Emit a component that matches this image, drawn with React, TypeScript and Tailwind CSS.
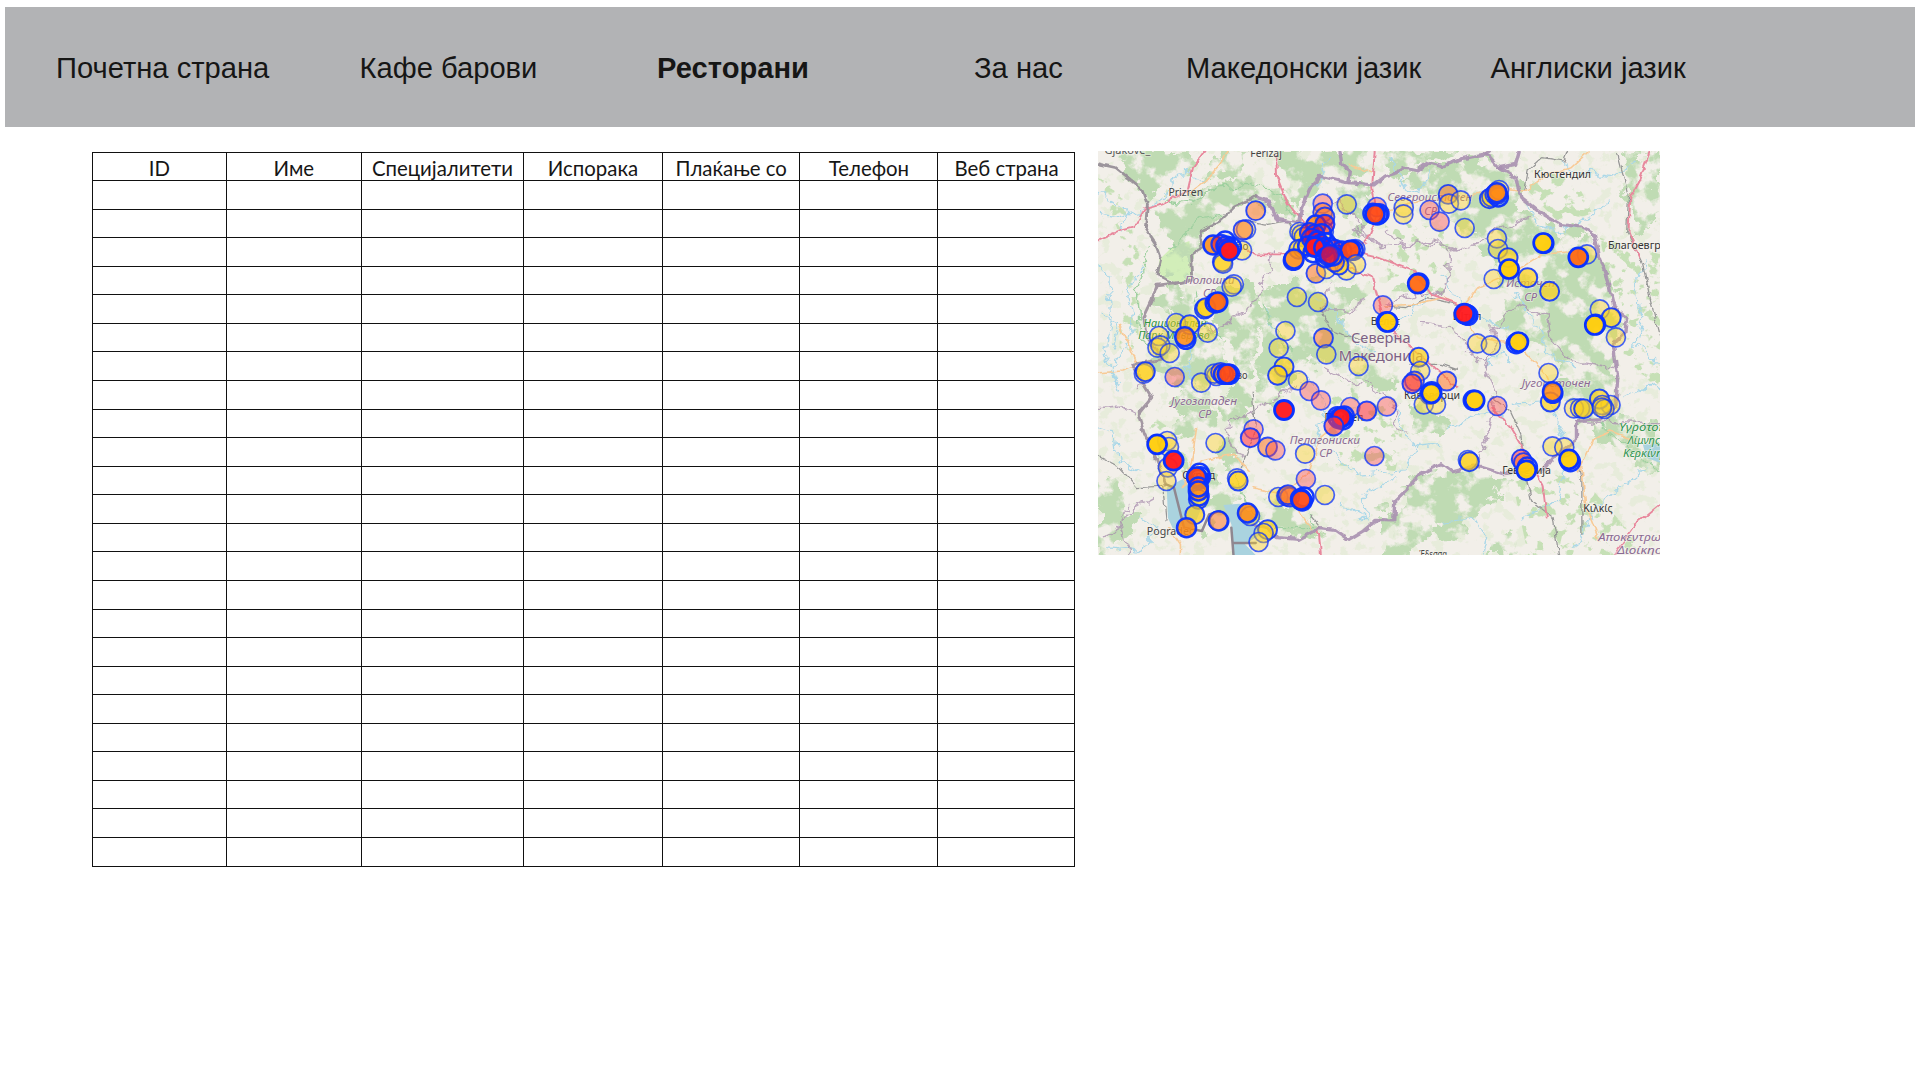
import React from "react";

const navItems = [
  { label: "Почетна страна", cell: "w-[303.5px]" },
  { label: "Кафе барови", cell: "w-[297.5px]" },
  { label: "Ресторани", cell: "w-[317px]", active: true },
  { label: "За нас", cell: "w-[212px]" },
  { label: "Македонски јазик", cell: "w-[304.5px]" },
  { label: "Англиски јазик", cell: "w-[300px]" },
];

const columns = ["ID", "Име", "Специјалитети", "Испорака", "Плаќање со", "Телефон", "Веб страна"];
const emptyRows = Array.from({ length: 24 }, (_, i) => i);

/* Map units: 1568 x 1212 stretched over 562 x 404 pixels. */
const SX = 562 / 1568;
const SY = 404 / 1212;

const woods = [
  "M80 0H265L250 70 205 115 130 135 70 60Z",
  "M150 150 215 150 300 105 380 80 500 95 545 200 500 190 470 140 430 130 360 180 300 230 255 280 260 390 180 390 205 270 160 190Z",
  "M330 0 420 20 400 70 300 90Z",
  "M510 0H765L750 90 630 80 560 190 520 110Z",
  "M650 100 760 110 725 240 670 190Z",
  "M780 10 900 0 1060 0 900 50 800 60Z",
  "M850 70 960 50 1100 20 1165 80 1200 200 1100 260 1010 240 900 120Z",
  "M1060 270 1200 200 1280 230 1385 260 1440 470 1450 690 1340 700 1250 600 1120 480 1140 420Z",
  "M1090 530 1180 470 1300 560 1440 590 1440 670 1290 640 1180 570Z",
  "M1150 480 1240 480 1270 560 1180 590Z",
  "M260 420 420 390 480 490 430 580 430 700 400 900 370 960 330 830 390 640 340 500Z",
  "M150 560 250 470 350 560 340 700 230 700 160 640Z",
  "M230 700 330 690 330 820 240 850 215 780Z",
  "M480 390 740 390 740 480 620 500 640 640 570 640 500 760 440 760 450 560Z",
  "M560 480 690 500 760 620 900 660 850 700 710 700 640 620Z",
  "M660 380 760 410 730 480 630 490Z",
  "M870 700 960 790 950 860 880 850 890 770Z",
  "M880 970 1020 960 1140 980 1100 1080 1000 1150 890 1100 830 1110Z",
  "M790 1080 870 1020 940 1140 870 1212 790 1212Z",
  "M1090 1140 1160 1160 1150 1212H1090Z",
  "M1270 680 1440 690 1440 820 1340 820 1310 760Z",
  "M1380 810 1568 810V950L1500 940 1430 880Z",
  "M1480 0H1568V170L1500 260 1470 130Z",
  "M470 1030 570 1070 610 1160 500 1150 440 1080Z",
  "M290 950 380 1000 370 1110 300 1130Z",
  "M0 990 80 1020 110 1090 40 1212H0Z",
  "M340 430 180 420 170 470 240 500Z",
];

const lightWoods = [
  "M0 80 60 110 120 330 110 620 60 590 70 280Z",
  "M1200 30 1330 80 1380 190 1280 210 1200 120Z",
  "M1400 260 1568 310V720L1470 620Z",
  "M800 200 980 240 970 430 810 420Z",
  "M650 700 860 780 830 960 640 940Z",
  "M1150 960 1350 980 1540 1212H1200Z",
  "M130 780 240 860 260 1000 180 960Z",
];

const park = "M205 290 255 270 262 370 255 392 215 396 165 365 172 325Z";

const lakes = [
  "M192 1010 235 985 275 1020 285 1080 262 1140 212 1140 195 1100Z",
  "M350 1062 395 1058 440 1100 455 1150 410 1180 440 1212H378L372 1120Z",
  "M1520 880H1568V935L1530 920Z",
];

const rivers = [
  "M0 130 40 150 90 190 130 180 180 140 240 60 300 90",
  "M0 340 30 380 40 520 20 610 60 720",
  "M120 350 80 430 100 520 70 600",
  "M240 480 260 580 250 650 300 740",
  "M470 470 500 560 520 640 600 700 640 780 600 880",
  "M820 570 870 480 930 430",
  "M590 430 650 480 720 570 780 610",
  "M960 370 1000 440 1050 490 1150 540",
  "M1190 150 1220 220 1290 240 1370 200 1430 150",
  "M1290 30 1330 60 1430 80 1500 30",
  "M1530 330 1490 410 1520 500 1500 580 1568 640",
  "M1160 430 1230 520 1250 600 1330 650",
  "M980 840 1060 780 1130 800",
  "M1160 760 1260 750 1310 870",
  "M830 770 880 890 960 880",
  "M650 900 720 970 850 960 900 880",
  "M680 1060 750 1110 740 1030 830 980",
  "M960 1110 1050 1100 1080 1160 1070 1212",
  "M1180 1100 1280 1050 1300 940",
  "M1330 1190 1400 1060 1470 1000 1530 950",
  "M0 830 50 850 60 930 120 960",
  "M30 1190 110 1200 170 1130 120 1100",
  "M820 20 850 100 900 130 920 60",
  "M640 20 620 90 580 120",
  "M1470 740 1540 700 1568 720",
  "M1080 640 1130 600 1150 640",
  "M0 190 50 200 90 190 60 240",
  "M70 600 30 660 60 700",
  "M0 480 60 520 40 600",
];

const nationalBorder =
  "M440 138 475 150 500 205 560 216 568 170 590 112 620 76 650 84 690 94 770 102 800 76 835 66 850 50 890 60 920 35 960 47 1020 22 1085 8 1120 50 1165 80 1180 140 1230 182 1290 220 1350 228 1385 250 1400 320 1425 400 1440 470 1475 500 1470 545 1438 580 1450 680 1445 760 1400 806 1335 812 1335 870 1268 920 1240 960 1130 968 1075 950 1050 945 990 962 960 938 895 970 862 1015 828 1050 825 1110 775 1108 740 1140 700 1165 660 1135 620 1130 560 1165 500 1160 470 1130 430 1120";
const westBorder =
  "M0 38 50 50 90 85 120 110 138 160 132 235 160 280 175 325 165 370 215 398 262 385 258 310 290 290 285 240 340 210 380 168 440 138";
const southWestBorder =
  "M260 390 165 402 150 450 128 500 135 560 180 625 95 640 122 690 150 740 112 790 130 850 165 930 190 1000";

const thinBorders = [
  "M0 770 60 765 105 790",
  "M95 640 120 690 110 720",
  "M150 1045 90 1080 65 1130 90 1212",
  "M720 230 790 290 900 275 975 290 980 370 960 430 890 430 800 460",
  "M640 120 710 200 780 280",
  "M250 560 350 530 400 480 445 450 450 400 485 350 490 300",
  "M640 400 630 480 700 480 750 440",
  "M900 520 980 530 1030 590 1080 640 1110 590 1100 530 1170 465 1250 490 1260 560 1320 630 1440 650",
  "M630 650 700 690 760 700 830 750 830 830 870 850",
  "M400 920 360 860 370 810 420 790 500 740 560 700",
  "M1080 640 1110 720 1090 840 1060 930",
  "M810 240 860 280 930 270 1000 300 1080 270 1110 230 1200 200",
  "M1335 812 1568 818",
  "M10 1160 60 1130 80 1060",
];

const motorways = [
  "M300 0 265 50 250 120 180 160 130 175 100 230 60 240 0 268",
  "M497 15 500 80 530 160 580 220",
  "M772 0 765 110 780 190 750 270 700 300",
  "M350 270 440 310 520 310 600 300",
  "M700 300 780 320 880 360 930 430 1020 465",
  "M700 350 765 380 780 440 800 520 860 580 930 640 1000 710",
  "M1100 770 1150 830 1190 900 1240 1000 1252 1100",
  "M1540 0 1510 90 1485 140 1480 240 1510 320",
  "M615 1130 622 1212",
  "M1440 1212 1500 1120 1568 1060",
];

const mainRoads = [
  "M0 665 70 660 110 640 90 590 60 520",
  "M360 0 340 40 300 90 250 130",
  "M275 830 260 940 235 1010 290 930 380 910 420 960",
  "M430 1010 520 1030 590 960 620 860 700 790",
  "M800 465 880 460 960 440 1020 465",
  "M1020 465 1060 410 1150 370 1240 310 1340 300",
  "M1020 500 1060 560 1170 580 1250 670 1270 720",
  "M1130 110 1190 120 1250 70 1320 50 1370 0",
  "M700 40 760 65",
  "M560 1080 600 1140",
  "M1340 960 1380 870 1430 840 1500 870",
  "M1350 950 1360 1060 1400 1170",
  "M800 180 900 150 980 140 1110 120",
  "M200 1130 230 1180 230 1212",
];

const greyRoads = [
  "M0 915 60 950 110 1010 190 1005",
  "M420 210 470 220 530 210 560 280",
  "M800 465 860 470 920 440 1020 465",
  "M1190 120 1200 60 1240 20 1300 30 1310 0",
  "M870 640 960 640 1000 655",
  "M1100 740 1150 780 1180 850 1190 960 1210 1050 1270 1100 1285 1212",
  "M1350 1150 1350 980 1340 930",
  "M590 1090 620 1130",
  "M430 720 440 840 400 950",
  "M180 1000 190 1110",
  "M1450 10 1470 90 1480 140 1475 240 1520 340 1540 440 1568 560",
  "M620 470 650 540 750 570",
];

type Marker = [number, number, string];

const kinds: Record<string, { fill: string; opacity: number; ring: number; ringOpacity: number }> = {
  y: { fill: "#ffd21a", opacity: 0.38, ring: 1.7, ringOpacity: 0.75 },
  Y: { fill: "#ffd014", opacity: 0.68, ring: 2, ringOpacity: 0.88 },
  G: { fill: "#ffcd0c", opacity: 0.96, ring: 2.7, ringOpacity: 1 },
  o: { fill: "#ff7a2c", opacity: 0.55, ring: 1.9, ringOpacity: 0.85 },
  O: { fill: "#ff8a14", opacity: 0.85, ring: 2.5, ringOpacity: 0.95 },
  D: { fill: "#ff6a14", opacity: 0.95, ring: 2.7, ringOpacity: 1 },
  p: { fill: "#ff4a4a", opacity: 0.4, ring: 1.7, ringOpacity: 0.75 },
  P: { fill: "#ff3a44", opacity: 0.58, ring: 2, ringOpacity: 0.88 },
  F: { fill: "#ff4a14", opacity: 0.93, ring: 2.6, ringOpacity: 1 },
  R: { fill: "#ff1c20", opacity: 0.97, ring: 2.8, ringOpacity: 1 },
  c: { fill: "#e0143c", opacity: 0.55, ring: 2.2, ringOpacity: 0.9 },
  n: { fill: "none", opacity: 0, ring: 2.5, ringOpacity: 0.95 },
};

const markers: Marker[] = [
  [440, 179, "o"], [413, 235, "y"], [405, 237, "o"],
  [402, 298, "y"], [347, 333, "Y"], [349, 338, "y"],
  [355, 270, "n"], [372, 288, "n"], [321, 282, "O"], [343, 280, "c"], [357, 285, "n"], [361, 292, "c"], [366, 299, "R"],
  [379, 400, "y"], [373, 407, "y"], [297, 474, "Y"], [301, 470, "Y"], [327, 456, "n"], [334, 453, "D"],
  [218, 516, "y"], [256, 521, "Y"], [306, 545, "y"], [170, 555, "y"], [245, 565, "n"], [242, 557, "O"],
  [166, 590, "y"], [174, 583, "y"], [200, 606, "y"],
  [128, 668, "y"], [132, 662, "Y"], [214, 678, "p"], [288, 695, "y"],
  [330, 675, "y"], [325, 668, "y"], [342, 664, "o"], [350, 670, "n"], [367, 670, "n"], [361, 669, "F"],
  [627, 158, "p"], [627, 184, "o"], [633, 198, "o"], [694, 160, "y"],
  [562, 243, "y"], [568, 250, "y"], [574, 258, "y"], [630, 242, "y"],
  [560, 295, "Y"], [572, 292, "y"], [608, 222, "O"], [633, 220, "c"],
  [590, 245, "c"], [605, 250, "c"], [624, 248, "n"], [595, 262, "c"], [612, 270, "n"], [585, 285, "n"],
  [620, 280, "c"], [635, 275, "n"], [648, 290, "n"], [660, 295, "c"], [600, 305, "n"], [628, 302, "n"], [668, 312, "c"],
  [680, 300, "n"], [718, 294, "y"], [712, 298, "n"], [704, 298, "F"],
  [608, 367, "o"], [637, 354, "y"], [693, 358, "y"], [720, 340, "y"], [672, 342, "Y"], [660, 333, "o"],
  [545, 328, "n"], [547, 324, "O"], [605, 288, "R"], [635, 320, "n"], [655, 315, "n"], [630, 290, "n"], [642, 315, "c"], [646, 311, "c"],
  [778, 168, "p"], [780, 192, "n"], [784, 188, "n"], [767, 187, "n"], [773, 190, "F"],
  [853, 170, "y"], [852, 190, "y"], [925, 177, "p"], [977, 130, "o"], [979, 158, "y"], [1012, 148, "y"],
  [953, 212, "p"], [1023, 231, "y"],
  [1092, 143, "Y"], [1098, 138, "y"], [1107, 130, "Y"], [1117, 138, "n"], [1119, 117, "y"], [1115, 130, "o"], [1113, 125, "O"],
  [1113, 262, "y"], [1116, 294, "y"], [1144, 320, "Y"], [1104, 384, "y"], [1147, 354, "G"], [1199, 380, "Y"],
  [1244, 277, "n"], [1242, 276, "G"], [1364, 310, "y"], [1340, 319, "D"], [1260, 421, "Y"],
  [1400, 475, "y"], [1432, 500, "Y"], [1388, 520, "n"], [1386, 522, "G"], [1445, 559, "y"],
  [895, 396, "n"], [892, 398, "D"], [795, 463, "p"], [805, 512, "n"], [808, 513, "G"],
  [1032, 493, "n"], [1027, 490, "n"], [1022, 488, "R"], [1167, 578, "n"], [1173, 573, "G"],
  [1058, 577, "y"], [1096, 583, "y"], [555, 438, "y"], [614, 453, "y"], [523, 540, "y"], [504, 591, "y"],
  [629, 561, "o"], [637, 610, "y"], [727, 645, "y"], [519, 648, "Y"], [501, 673, "Y"], [558, 688, "y"],
  [590, 720, "p"], [622, 748, "p"], [519, 777, "R"], [704, 768, "p"], [750, 780, "P"], [806, 766, "p"],
  [672, 803, "n"], [684, 806, "n"], [668, 797, "n"], [687, 795, "n"], [679, 799, "R"], [658, 825, "P"],
  [771, 915, "p"], [434, 835, "p"], [425, 860, "P"], [473, 888, "o"], [495, 898, "p"], [578, 908, "y"], [328, 876, "y"],
  [895, 619, "Y"], [899, 660, "y"], [883, 690, "o"], [876, 698, "P"], [973, 690, "o"],
  [931, 722, "n"], [926, 730, "n"], [909, 760, "y"], [943, 760, "y"], [930, 727, "G"],
  [1047, 748, "n"], [1051, 748, "G"], [1114, 765, "p"],
  [1257, 666, "y"], [1262, 753, "Y"], [1269, 727, "n"], [1268, 722, "O"],
  [1328, 772, "y"], [1345, 772, "y"], [1355, 773, "Y"], [1430, 762, "y"], [1399, 744, "Y"], [1407, 762, "y"], [1413, 774, "y"], [1406, 770, "y"],
  [1268, 886, "y"], [1301, 889, "y"], [1318, 932, "n"], [1314, 925, "G"],
  [1032, 927, "y"], [1036, 932, "Y"], [1181, 925, "P"], [1187, 935, "o"], [1198, 948, "n"], [1195, 958, "G"],
  [193, 870, "y"], [198, 888, "y"], [165, 880, "G"], [195, 949, "y"], [191, 990, "y"], [211, 929, "R"],
  [388, 982, "y"], [391, 990, "Y"], [633, 1032, "y"], [580, 984, "p"],
  [283, 967, "n"], [286, 977, "n"], [280, 985, "n"], [275, 978, "F"], [280, 1045, "Y"], [282, 1035, "n"], [280, 1020, "O"], [280, 1008, "n"],
  [270, 1091, "Y"], [247, 1130, "O"], [337, 1110, "n"], [335, 1109, "o"], [424, 1095, "y"], [417, 1086, "O"],
  [503, 1038, "y"], [526, 1035, "o"], [535, 1038, "o"], [530, 1031, "o"], [575, 1038, "n"], [565, 1043, "n"], [570, 1050, "n"], [567, 1047, "F"],
  [473, 1136, "Y"], [462, 1146, "y"], [448, 1173, "y"],
];

type Label = { x: number; y: number; t: string; size: number; color: string; italic?: boolean; w: number };
const purple = "#8b6a93";
const labels: Label[] = [
  { x: 82, y: 10, t: "Gjakovë_", size: 10.5, color: "#555", w: 128 },
  { x: 469, y: 18, t: "Ferizaj", size: 10.5, color: "#444", w: 88 },
  { x: 245, y: 136, t: "Prizren", size: 10.5, color: "#444", w: 97 },
  { x: 1296, y: 82, t: "Кюстендил", size: 10.5, color: "#333", w: 159 },
  { x: 1505, y: 295, t: "Благоевгра", size: 10.5, color: "#333", w: 164 },
  { x: 926, y: 151, t: "Североисточен", size: 11, color: purple, italic: true, w: 236 },
  { x: 928, y: 193, t: "СР", size: 11, color: purple, italic: true, w: 36 },
  { x: 312, y: 398, t: "Полошки", size: 11.5, color: purple, italic: true, w: 138 },
  { x: 311, y: 438, t: "СР", size: 11, color: purple, italic: true, w: 36 },
  { x: 1207, y: 408, t: "Источен", size: 11.5, color: purple, italic: true, w: 136 },
  { x: 1207, y: 449, t: "СР", size: 11, color: purple, italic: true, w: 36 },
  { x: 215, y: 527, t: "Национален", size: 10.5, color: "#2f9440", italic: true, w: 176 },
  { x: 212, y: 565, t: "Парк Маврово", size: 10.5, color: "#2f9440", italic: true, w: 200 },
  { x: 371, y: 684, t: "Кичево", size: 10.5, color: "#444", w: 92 },
  { x: 374, y: 296, t: "Тетово", size: 10.5, color: "#444", w: 92 },
  { x: 296, y: 761, t: "Југозападен", size: 11.5, color: purple, italic: true, w: 184 },
  { x: 298, y: 802, t: "СР", size: 11, color: purple, italic: true, w: 36 },
  { x: 802, y: 521, t: "Велес", size: 10.5, color: "#333", w: 82 },
  { x: 789, y: 576, t: "Северна", size: 14, color: "#7c6084", w: 166 },
  { x: 790, y: 630, t: "Македонија", size: 14, color: "#7c6084", w: 236 },
  { x: 1030, y: 506, t: "Штип", size: 10.5, color: "#333", w: 80 },
  { x: 932, y: 743, t: "Кавадарци", size: 10.5, color: "#333", w: 156 },
  { x: 686, y: 811, t: "Прилеп", size: 10.5, color: "#333", w: 108 },
  { x: 1278, y: 709, t: "Југоисточен", size: 11.5, color: purple, italic: true, w: 192 },
  { x: 633, y: 878, t: "Пелагониски", size: 11.5, color: purple, italic: true, w: 196 },
  { x: 635, y: 919, t: "СР", size: 11, color: purple, italic: true, w: 36 },
  { x: 281, y: 985, t: "Охрид", size: 10.5, color: "#333", w: 92 },
  { x: 202, y: 1153, t: "Pogradec", size: 10.5, color: "#444", w: 132 },
  { x: 1196, y: 970, t: "Гевгелија", size: 10.5, color: "#333", w: 136 },
  { x: 1395, y: 1083, t: "Κιλκίς", size: 10.5, color: "#333", w: 82 },
  { x: 1538, y: 840, t: "Υγρότοπος", size: 11, color: "#2f9450", italic: true, w: 168 },
  { x: 1523, y: 879, t: "Λίμνης", size: 11, color: "#2f9450", italic: true, w: 90 },
  { x: 1528, y: 917, t: "Κερκίνης", size: 11, color: "#2f9450", italic: true, w: 126 },
  { x: 1494, y: 1170, t: "Αποκεντρωμ", size: 11.5, color: purple, italic: true, w: 196 },
  { x: 1522, y: 1210, t: "Διοίκηση", size: 11.5, color: purple, italic: true, w: 148 },
  { x: 935, y: 1221, t: "Έδεσσα", size: 10.5, color: "#444", w: 78 },
];

function RestaurantMap() {
  return (
    <svg width="562" height="404" viewBox="0 0 562 404" className="block shrink-0 overflow-hidden">
      <defs>
        <filter id="woods" x="0" y="0" width="1568" height="1212" filterUnits="userSpaceOnUse" colorInterpolationFilters="sRGB">
          <feTurbulence type="fractalNoise" baseFrequency="0.016" numOctaves="5" seed="7" result="n" />
          <feDisplacementMap in="SourceGraphic" in2="n" scale="110" xChannelSelector="R" yChannelSelector="G" result="d" />
          <feColorMatrix in="n" type="matrix" values="0 0 0 0 0  0 0 0 0 0  0 0 0 0 0  0 0 8 0 -3.1" result="m" />
          <feComposite in="d" in2="m" operator="in" />
        </filter>
        <filter id="specks" x="0" y="0" width="1568" height="1212" filterUnits="userSpaceOnUse" colorInterpolationFilters="sRGB">
          <feTurbulence type="fractalNoise" baseFrequency="0.03" numOctaves="4" seed="21" result="n" />
          <feColorMatrix in="n" type="matrix" values="0 0 0 0 0  0 0 0 0 0  0 0 0 0 0  0 12 0 0 -6.6" result="m" />
          <feComposite in="SourceGraphic" in2="m" operator="in" />
        </filter>
        <filter id="wobble" x="0" y="0" width="1568" height="1212" filterUnits="userSpaceOnUse" colorInterpolationFilters="sRGB">
          <feTurbulence type="fractalNoise" baseFrequency="0.03" numOctaves="3" seed="3" result="n" />
          <feDisplacementMap in="SourceGraphic" in2="n" scale="40" xChannelSelector="R" yChannelSelector="G" />
        </filter>
        <filter id="jitter" x="0" y="0" width="1568" height="1212" filterUnits="userSpaceOnUse" colorInterpolationFilters="sRGB">
          <feTurbulence type="fractalNoise" baseFrequency="0.04" numOctaves="2" seed="11" result="n" />
          <feDisplacementMap in="SourceGraphic" in2="n" scale="16" xChannelSelector="R" yChannelSelector="G" />
        </filter>
      </defs>
      <rect width="562" height="404" fill="#f2efe9" />
      <g transform={`scale(${SX} ${SY})`} fill="none" strokeLinejoin="round" strokeLinecap="round">
        <g filter="url(#specks)" fill="#d8e8c6">
          <rect width="1568" height="1212" opacity="0.4" />
          {lightWoods.map((d) => <path key={d} d={d} fill="#c6e0b6" />)}
        </g>
        <path d={park} fill="#d2eeb9" />
        <g filter="url(#woods)" fill="#bfdbb3">
          {woods.map((d) => <path key={d} d={d} />)}
        </g>
        {lakes.map((d) => <path key={d} d={d} fill="#aad3df" />)}
        <g filter="url(#wobble)">
          <g stroke="#a9d7e8" strokeWidth="3.5">{rivers.map((d) => <path key={d} d={d} />)}</g>
          <g stroke="#a98fae" strokeWidth="4.5" opacity="0.75">{thinBorders.map((d) => <path key={d} d={d} />)}</g>
          <g stroke="#9fd0a0" strokeWidth="4">
            <path d="M180 150 260 160 320 110 420 100 510 130 545 200M200 290 290 200 340 190" />
            <path d="M140 300 110 420 120 560 170 620M275 420 290 500 350 560M460 460 500 540 540 600" />
            <path d="M380 960 420 1080 470 1130 610 1130 590 1090M1400 815 1480 900 1568 960" />
          </g>
        </g>
        <g filter="url(#jitter)">
          <g stroke="#969696" strokeWidth="3.5">{greyRoads.map((d) => <path key={d} d={d} />)}</g>
          <g stroke="#f8ca95" strokeWidth="4.5">{mainRoads.map((d) => <path key={d} d={d} />)}</g>
          <g stroke="#e8889d" strokeWidth="5.5">{motorways.map((d) => <path key={d} d={d} />)}</g>
          <path d={nationalBorder} stroke="#a990b0" strokeWidth="9.5" opacity="0.9" />
          <path d="M675 0 680 40 704 60 700 95M1085 8 1095 0M1120 50 1165 40 1175 0" stroke="#a990b0" strokeWidth="9.5" opacity="0.9" />
          <path d={westBorder} stroke="#978f98" strokeWidth="8" opacity="0.95" />
          <path d={southWestBorder} stroke="#9f929f" strokeWidth="8" opacity="0.95" />
        </g>
        <path d="M190 1000 212 1010 240 1130 290 1140 310 1090 340 1080M372 1130 378 1212M378 1176H440" stroke="#8f8790" strokeWidth="7" />
      </g>
      <g fontFamily='"Noto Sans", "Open Sans", sans-serif' textAnchor="middle">
        {labels.map((l) => (
          <text
            key={`${l.t}-${l.x}-${l.y}`}
            x={l.x * SX}
            y={l.y * SY}
            fontSize={l.size}
            fill={l.color}
            fontStyle={l.italic ? "italic" : "normal"}
            textLength={l.w * SX}
            lengthAdjust="spacingAndGlyphs"
            stroke="#f7f5f0"
            strokeOpacity="0.6"
            strokeWidth="1.4"
            paintOrder="stroke"
          >
            {l.t}
          </text>
        ))}
      </g>
      {markers.map(([x, y, k], i) => (
        <circle
          key={i}
          cx={x * SX}
          cy={y * SY}
          r={9.5}
          fill={kinds[k].fill}
          fillOpacity={kinds[k].opacity}
          stroke="#0a32ff"
          strokeOpacity={kinds[k].ringOpacity}
          strokeWidth={kinds[k].ring}
        />
      ))}
    </svg>
  );
}

export default function App() {
  return (
    <div className="h-[1080px] w-[1920px] overflow-hidden bg-white pl-[5px] pt-[7px]">
      <nav className="flex h-[120px] w-[1909.5px] items-center bg-[#b2b3b5] pl-[51px] font-['Liberation_Sans',Arial,sans-serif] text-[29.15px] leading-none text-[#161615]">
        {navItems.map((n) => (
          <a key={n.label} className={`${n.cell} shrink-0 whitespace-nowrap pt-[4px] ${n.active ? "font-bold" : ""}`}>
            {n.label}
          </a>
        ))}
      </nav>
      <main className="flex items-start pl-[87px] pt-[24px]">
        <div className="mr-[23px] mt-[0.5px] grid w-[983px] grid-cols-[133.6px_135.4px_162px_139px_137.5px_137.8px_137.7px] border-b border-r border-[#111] font-[Lato,'Open_Sans',sans-serif]">
          {columns.map((c) => (
            <div key={c} className="flex h-[28.57px] items-center justify-center whitespace-nowrap border-l border-t border-[#111] pt-[3px] text-[20.4px] leading-none text-[#161616]">
              {c}
            </div>
          ))}
          {emptyRows.map((r) =>
            columns.map((c) => <div key={`${r}-${c}`} className="h-[28.57px] border-l border-t border-[#111]" />)
          )}
        </div>
        <RestaurantMap />
      </main>
    </div>
  );
}
